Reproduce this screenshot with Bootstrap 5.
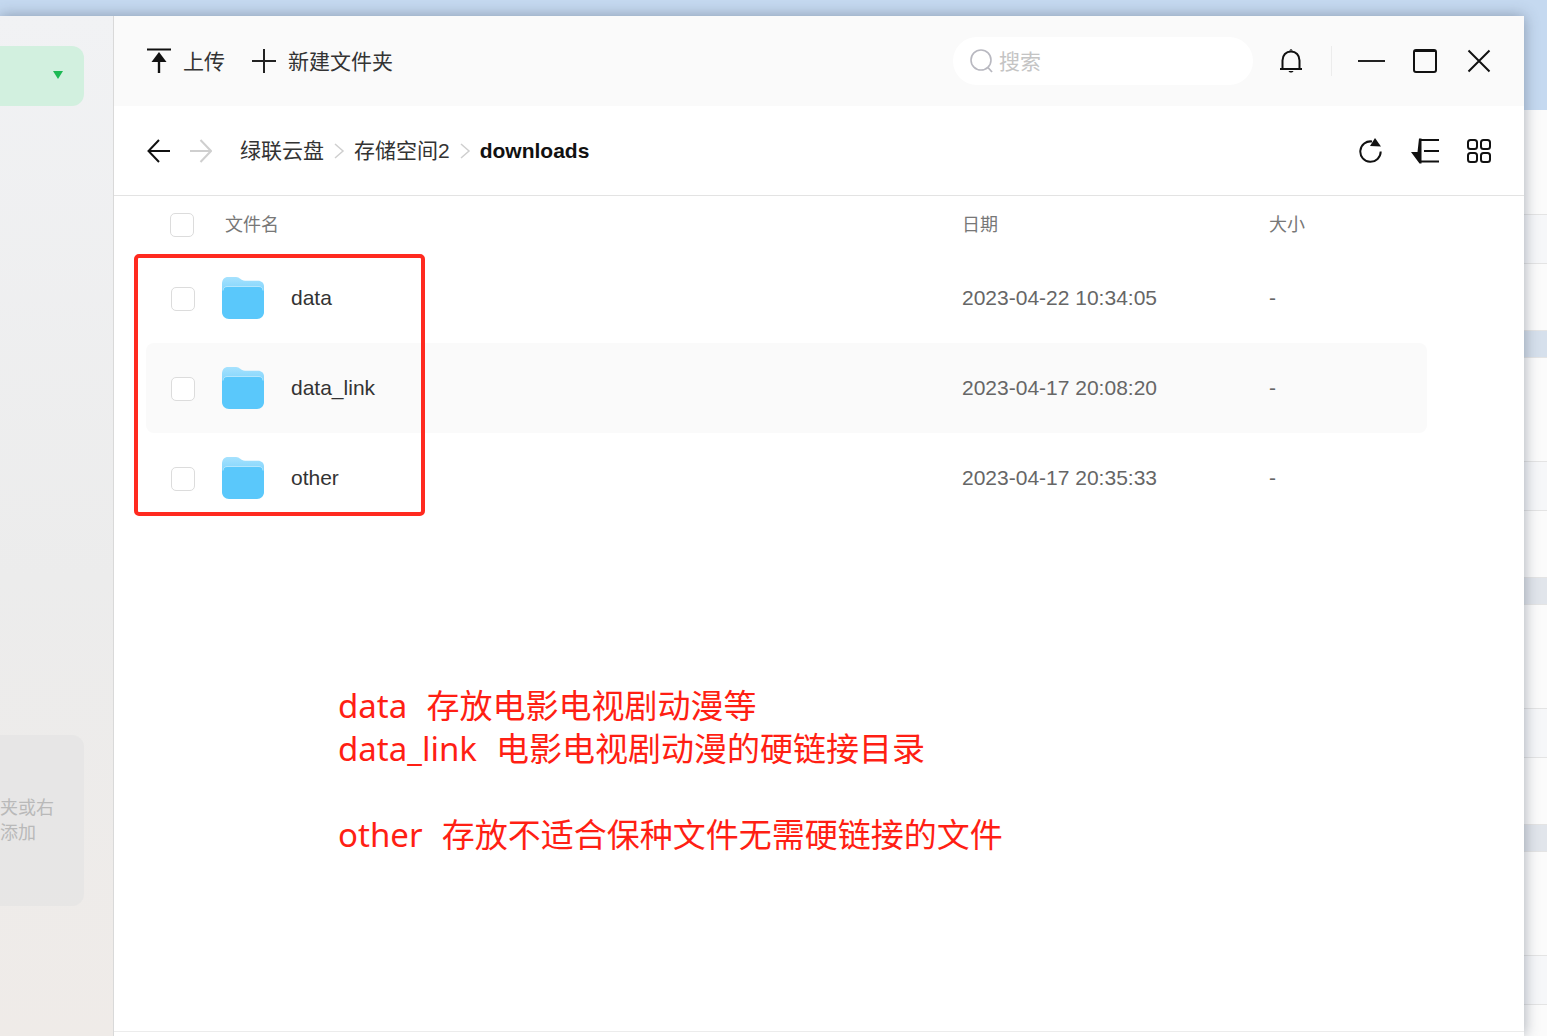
<!DOCTYPE html>
<html lang="zh">
<head>
<meta charset="utf-8">
<title>downloads</title>
<link rel="stylesheet" href="https://cdn.jsdelivr.net/npm/bootstrap@5.3.0/dist/css/bootstrap.min.css">
<style>
html,body{height:1036px;overflow:hidden}
body{background:#c5d9f0;font-family:"Liberation Sans","Noto Sans CJK SC",sans-serif;color:#222;font-size:21px}
.desk-top{height:16px}
.desk-main{height:1020px}
.app-shell{width:1524px;box-shadow:0 0 14px rgba(60,70,90,.45);position:relative;z-index:2}
.side-pane{width:114px;background:linear-gradient(180deg,#f1f2f4 0%,#ececec 55%,#efebe8 100%);border-right:1px solid #d9d9d9;padding-top:30px}
.drive-pick{width:84px;height:60px;background:#d2f0df;border-radius:0 12px 12px 0;padding-right:21px}
.tri-down{width:0;height:0;border-left:5.5px solid transparent;border-right:5.5px solid transparent;border-top:8px solid #1db954;margin-top:-3px}
.hint-box{width:84px;height:171px;margin-top:629px;background:rgba(225,225,225,.55);border-radius:0 12px 12px 0;color:#b9b9b9;font-size:18px;line-height:25px;padding-top:61px;white-space:nowrap}
.win-pane{width:1410px;background:#fff}
.tool-bar{height:90px;background:#fafafa;padding-left:32px;color:#333}
.plain-act{display:flex;align-items:center;gap:12px;color:#333}
.plain-act span{padding-top:1px}
.act-new{margin-left:27px}
.search-pill{width:300px;height:48px;border-radius:24px;background:#fff;margin-left:auto;padding-left:16px;color:#c4c4c4;gap:5px}
.search-pill span{padding-top:1px}
.v-sep{width:1px;height:30px;background:#ececec;margin:0 26px 0 28px}
.bell-ico{margin-left:26px}
.win-ctl{margin-right:33px}
.ctl-max{margin:0 30px 0 28px}
.crumb-bar{height:90px;padding-left:32px;border-bottom:1px solid #e3e3e3;color:#333}
.crumb-nav{margin-left:18px;gap:0}
.crumb-now{font-weight:700;color:#111}
.crumb-sep{margin:0 9px 0 9px}
.crumb-start{margin-left:28px}
.crumb-tools{margin-left:auto;margin-right:33px;gap:28px}
.list-head{height:57px;padding-left:56px;font-size:18px;color:#777}
.list-head span:not(.pick-box){margin-top:2px}
.head-name{margin-left:31px}
.cell-date{position:absolute;left:848px}
.cell-size{position:absolute;left:1155px}
.list-wrap{position:relative}
.file-row{height:90px;width:1281px;margin-left:32px;border-radius:8px;padding-left:25px;position:relative}
.file-row.row-hover{background:#fafafa}
.file-row .cell-date{left:816px;color:#666}
.file-row .cell-size{left:1123px;color:#666}
.file-name{margin-left:27px;color:#333}
.pick-box{width:24px;height:24px;margin:0;border:1px solid #dcdcdc;border-radius:5px;background:#fff;flex:none}
.file-row .pick-box{margin-top:2px}
.folder-ico{margin-left:27px;flex:none}
.red-frame{position:absolute;left:20px;top:1px;width:291px;height:262px;border:4px solid #ff2a1f;border-radius:5px;pointer-events:none}
.note-block{margin:161px 0 0 224px;color:#ff1f14;font-family:"Noto Sans","Noto Sans CJK SC",sans-serif;font-size:33px;line-height:43px;white-space:pre;word-spacing:1px}
.win-foot{margin-top:auto;height:5px;border-top:1px solid #ececec}
.back-strip{width:23px;background:#fbfbfb}
.strip-blue{height:94px;background:#c5d9f0;flex:none}
.strip-gap{background:#fbfbfb;flex:none}
.strip-end{background:#fbfbfb;flex:1 1 auto}
.strip-light{background:#f6f7f9;border-top:1px solid #e4e4e4;border-bottom:1px solid #e4e4e4;height:50px;flex:none}
.strip-a{background:#d6e0ec;border-top:1px solid #e4e4e4;border-bottom:1px solid #e4e4e4;height:28px;flex:none}
.strip-b{background:#e1e5eb;border-top:1px solid #e4e4e4;border-bottom:1px solid #e4e4e4;height:28px;flex:none}
.gap-first{height:104px}
.gap-long{height:103px}
.gap-short{height:66px}
</style>
</head>
<body class="m-0">
<svg width="0" height="0" class="position-absolute"><defs><linearGradient id="fold-back" x1="0" y1="0" x2="0" y2="1"><stop offset="0" stop-color="#a6e2fe"/><stop offset="1" stop-color="#6dcdfb"/></linearGradient></defs></svg>
<div class="desk-top"></div>
<div class="desk-main d-flex">
  <div class="app-shell d-flex">
    <aside class="side-pane flex-shrink-0">
      <div class="drive-pick d-flex align-items-center justify-content-end"><span class="tri-down"></span></div>
      <div class="hint-box">夹或右<br>添加</div>
    </aside>
    <main class="win-pane d-flex flex-column">
      <div class="tool-bar d-flex align-items-center">
        <a class="plain-act text-decoration-none" href="#">
          <svg width="25" height="26" viewBox="0 0 25 26" fill="none"><path d="M1 1.500H25" stroke="#111" stroke-width="2"/><path d="M13 25V11" stroke="#111" stroke-width="2.400"/><path d="M13 4L20.500 14H5.500Z" fill="#111"/></svg>
          <span>上传</span></a>
        <a class="plain-act act-new text-decoration-none" href="#">
          <svg width="24" height="26" viewBox="0 0 24 26" fill="none"><path d="M12 1V25M0 13H24" stroke="#222" stroke-width="2"/></svg>
          <span>新建文件夹</span></a>
        <div class="search-pill d-flex align-items-center">
          <svg width="25" height="26" viewBox="0 0 25 26" fill="none"><circle cx="12" cy="12" r="10" stroke="#b8b8c0" stroke-width="1.600"/><path d="M19 19.500L23 24" stroke="#b8b8c0" stroke-width="1.800"/></svg>
          <span>搜索</span>
        </div>
        <svg class="bell-ico" width="24" height="26" viewBox="0 0 24 26" fill="none"><path d="M3.500 20V12.500C3.500 7 7 3.500 12 3.500S20.500 7 20.500 12.500V20" stroke="#111" stroke-width="2"/><path d="M1 21H23" stroke="#111" stroke-width="2"/><path d="M10 2.500H14L12 1ZM9.500 23H14.500C13.500 25 10.500 25 9.500 23Z" fill="#111"/></svg>
        <span class="v-sep"></span>
        <div class="win-ctl d-flex align-items-center">
          <svg width="27" height="24" viewBox="0 0 27 24" fill="none"><path d="M0 12H27" stroke="#222" stroke-width="2"/></svg>
          <svg class="ctl-max" width="24" height="24" viewBox="0 0 24 24" fill="none"><rect x="1" y="1" width="22" height="22" rx="2" stroke="#111" stroke-width="2"/><path d="M1 2H23" stroke="#111" stroke-width="2"/></svg>
          <svg width="24" height="24" viewBox="0 0 24 24" fill="none"><path d="M1.500 1.500L22.500 22.500M22.500 1.500L1.500 22.500" stroke="#111" stroke-width="2"/></svg>
        </div>
      </div>
      <div class="crumb-bar d-flex align-items-center">
        <svg width="25" height="26" viewBox="0 0 25 26" fill="none"><path d="M24 13H3M13 2L2.500 13L13 24" stroke="#111" stroke-width="2"/></svg>
        <svg class="ms-3" width="25" height="26" viewBox="0 0 25 26" fill="none"><path d="M3 13H24M13.500 2L24 13L13.500 24" stroke="#cfcfcf" stroke-width="2"/></svg>
        <nav class="crumb-nav d-flex align-items-center crumb-start">
          <span>绿联云盘</span>
          <svg class="crumb-sep" width="12" height="18" viewBox="0 0 12 18" fill="none"><path d="M2 2L10 9L2 16" stroke="#cfcfcf" stroke-width="1.500"/></svg>
          <span>存储空间2</span>
          <svg class="crumb-sep" width="12" height="18" viewBox="0 0 12 18" fill="none"><path d="M2 2L10 9L2 16" stroke="#cfcfcf" stroke-width="1.500"/></svg>
          <span class="crumb-now">downloads</span>
        </nav>
        <div class="crumb-tools d-flex align-items-center">
          <svg width="24" height="26" viewBox="0 0 24 26" fill="none"><path d="M13 3.500A10.200 10.200 0 1 0 21.700 13.500" stroke="#111" stroke-width="2"/><path d="M16 0L22 8.500L11 8Z" fill="#111"/></svg>
          <svg width="28" height="26" viewBox="0 0 28 26" fill="none"><path d="M8 0.500H10.500V25.500H8.500L0 14H6.500Z" fill="#111"/><path d="M10 2H28M13 13H28M10 23.500H28" stroke="#111" stroke-width="2"/></svg>
          <svg width="24" height="26" viewBox="0 0 24 26" fill="none"><rect x="1" y="2" width="9" height="9" rx="2.500" stroke="#111" stroke-width="2"/><rect x="14" y="2" width="9" height="9" rx="2.500" stroke="#111" stroke-width="2"/><rect x="1" y="15" width="9" height="9" rx="2.500" stroke="#111" stroke-width="2"/><rect x="14" y="15" width="9" height="9" rx="2.500" stroke="#111" stroke-width="2"/></svg>
        </div>
      </div>
      <div class="list-head d-flex align-items-center position-relative">
        <span class="pick-box"></span>
        <span class="head-name">文件名</span>
        <span class="cell-date">日期</span>
        <span class="cell-size">大小</span>
      </div>
      <div class="list-wrap">
        <div class="file-row d-flex align-items-center">
          <span class="pick-box"></span>
          <svg class="folder-ico" width="42" height="42" viewBox="0 0 42 42"><path d="M0 7C0 2.500 2.500 0 6 0H14C18 0 18.500 3.700 23 3.700H36C39.500 3.700 42 6 42 9V22H0Z" fill="url(#fold-back)"/><path d="M0 15C0 12 2 10 5 10H37C40 10 42 12 42 15V35C42 39 39 42 35 42H7C3 42 0 39 0 35Z" fill="#5ac8fb"/><path d="M1 13.500C1 11 3 9.500 5 9.500H37C39 9.500 41 11 41 13.500" fill="none" stroke="#b5e6fc" stroke-width="1"/></svg>
          <span class="file-name">data</span>
          <span class="cell-date">2023-04-22 10:34:05</span>
          <span class="cell-size">-</span>
        </div>
        <div class="file-row row-hover d-flex align-items-center">
          <span class="pick-box"></span>
          <svg class="folder-ico" width="42" height="42" viewBox="0 0 42 42"><path d="M0 7C0 2.500 2.500 0 6 0H14C18 0 18.500 3.700 23 3.700H36C39.500 3.700 42 6 42 9V22H0Z" fill="url(#fold-back)"/><path d="M0 15C0 12 2 10 5 10H37C40 10 42 12 42 15V35C42 39 39 42 35 42H7C3 42 0 39 0 35Z" fill="#5ac8fb"/><path d="M1 13.500C1 11 3 9.500 5 9.500H37C39 9.500 41 11 41 13.500" fill="none" stroke="#b5e6fc" stroke-width="1"/></svg>
          <span class="file-name">data_link</span>
          <span class="cell-date">2023-04-17 20:08:20</span>
          <span class="cell-size">-</span>
        </div>
        <div class="file-row d-flex align-items-center">
          <span class="pick-box"></span>
          <svg class="folder-ico" width="42" height="42" viewBox="0 0 42 42"><path d="M0 7C0 2.500 2.500 0 6 0H14C18 0 18.500 3.700 23 3.700H36C39.500 3.700 42 6 42 9V22H0Z" fill="url(#fold-back)"/><path d="M0 15C0 12 2 10 5 10H37C40 10 42 12 42 15V35C42 39 39 42 35 42H7C3 42 0 39 0 35Z" fill="#5ac8fb"/><path d="M1 13.500C1 11 3 9.500 5 9.500H37C39 9.500 41 11 41 13.500" fill="none" stroke="#b5e6fc" stroke-width="1"/></svg>
          <span class="file-name">other</span>
          <span class="cell-date">2023-04-17 20:35:33</span>
          <span class="cell-size">-</span>
        </div>
        <div class="red-frame"></div>
      </div>
      <div class="note-block">data  存放电影电视剧动漫等
data_link  电影电视剧动漫的硬链接目录

other  存放不适合保种文件无需硬链接的文件</div>
      <div class="win-foot"></div>
    </main>
  </div>
  <div class="back-strip d-flex flex-column flex-shrink-0">
    <div class="strip-blue"></div>
    <div class="strip-gap gap-first"></div>
    <div class="strip-light"></div>
    <div class="strip-gap gap-short"></div>
    <div class="strip-a"></div>
    <div class="strip-gap gap-long"></div>
    <div class="strip-light"></div>
    <div class="strip-gap gap-short"></div>
    <div class="strip-b"></div>
    <div class="strip-gap gap-long"></div>
    <div class="strip-light"></div>
    <div class="strip-gap gap-short"></div>
    <div class="strip-b"></div>
    <div class="strip-gap gap-long"></div>
    <div class="strip-light"></div>
    <div class="strip-end"></div>
  </div>
</div>
<script src="https://cdn.jsdelivr.net/npm/bootstrap@5.3.0/dist/js/bootstrap.bundle.min.js"></script>
</body>
</html>
